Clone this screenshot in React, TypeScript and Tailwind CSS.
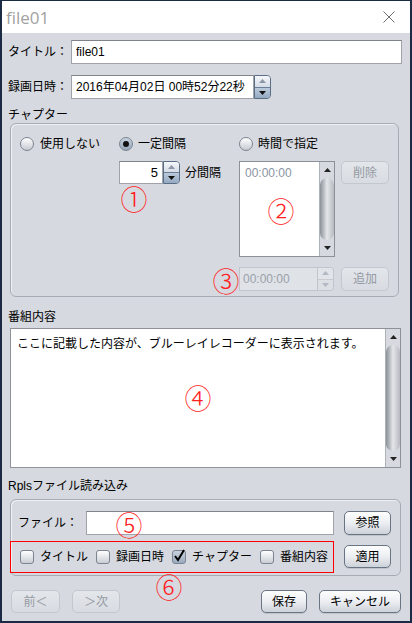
import React from "react";

function Tri({ up = false, color = "#1b1b1b" }: { up?: boolean; color?: string }) {
  return (
    <svg width="7" height="4" viewBox="0 0 7 4">
      <path d={up ? "M0 4 L3.5 0 L7 4 Z" : "M0 0 L7 0 L3.5 4 Z"} fill={color} />
    </svg>
  );
}

function Field({
  children,
  className = "",
  disabled = false,
}: {
  children?: React.ReactNode;
  className?: string;
  disabled?: boolean;
}) {
  return (
    <div
      className={`flex items-center border ${
        disabled
          ? "bg-[#dfe2e6] border-[#c2c6cc] text-[#9aa1ab]"
          : "bg-white border-[#a0a4aa] border-t-[#7f838a] text-black"
      } ${className}`}
    >
      {children}
    </div>
  );
}

function Spin({ disabled = false }: { disabled?: boolean }) {
  if (disabled) {
    return (
      <div className="w-[16px] h-full flex flex-col border border-l-0 border-[#c2c6cc] rounded-r-[4px] overflow-hidden">
        <div className="flex-1 flex items-center justify-center bg-[#e1e4e8] border-b border-[#c8ccd2]">
          <Tri up color="#b3b9c2" />
        </div>
        <div className="flex-1 flex items-center justify-center bg-[#dcdfe4]">
          <Tri color="#b3b9c2" />
        </div>
      </div>
    );
  }
  return (
    <div className="w-[17px] h-full flex flex-col border border-[#5a6d86] rounded-r-[4px] overflow-hidden">
      <div className="flex-1 flex items-center justify-center bg-linear-to-b from-[#f5f7fa] to-[#d4dce6] border-b border-[#6c7e95]">
        <Tri up color="#8b97a7" />
      </div>
      <div className="flex-1 flex items-center justify-center bg-linear-to-b from-[#bccadb] to-[#94a9c1]">
        <Tri color="#111" />
      </div>
    </div>
  );
}

function Btn({
  children,
  disabled = false,
  className = "",
}: {
  children: React.ReactNode;
  disabled?: boolean;
  className?: string;
}) {
  return (
    <div
      className={`flex items-center justify-center rounded-[5px] border ${
        disabled
          ? "border-[#c3c8cf] bg-linear-to-b from-[#e3e6ea] to-[#d8dbe1] text-[#949aa3]"
          : "border-[#6a7584] bg-linear-to-b from-[#fefefe] via-[#eceef2] to-[#cdd2d9] text-black shadow-[0_1px_0_#bfc4cb]"
      } ${className}`}
    >
      {children}
    </div>
  );
}

function Radio({ checked = false }: { checked?: boolean }) {
  return (
    <div
      className={`w-[14px] h-[14px] rounded-full border border-[#7b8490] flex items-center justify-center ${
        checked
          ? "bg-linear-to-b from-[#c9d3df] to-[#95a7bc]"
          : "bg-linear-to-b from-[#ffffff] to-[#c6cbd2]"
      }`}
    >
      {checked && <div className="w-[6px] h-[6px] rounded-full bg-[#111]" />}
    </div>
  );
}

function Check({ checked = false }: { checked?: boolean }) {
  return (
    <div
      className={`w-[14px] h-[14px] rounded-[3px] border border-[#7b8490] flex items-center justify-center ${
        checked
          ? "bg-linear-to-b from-[#c9d3df] to-[#9aabbf]"
          : "bg-linear-to-b from-[#ffffff] to-[#c9ced5]"
      }`}
    >
      {checked && (
        <svg width="12" height="13" viewBox="0 0 12 13" className="-mt-[3px]">
          <path d="M2 7 L5 11 L11 1" stroke="#000" strokeWidth="2" fill="none" />
        </svg>
      )}
    </div>
  );
}

function VScroll() {
  return (
    <div className="w-[15px] h-full flex flex-col bg-[#d6d9df] border-l border-[#aeb3ba]">
      <div className="h-[16px] flex items-center justify-center shrink-0">
        <Tri up color="#222" />
      </div>
      <div className="flex-1 rounded-[7px] bg-linear-to-r from-[#8b9098] via-[#e4e6e9] to-[#b6bac0]" />
      <div className="h-[16px] flex items-center justify-center shrink-0">
        <Tri color="#222" />
      </div>
    </div>
  );
}

function Mark({ n, x, y }: { n: string; x: number; y: number }) {
  return (
    <span
      className="absolute w-[30px] h-[30px] flex items-center justify-center text-[27px] leading-none text-[#ff2020] font-['Noto_Sans_CJK_JP',sans-serif] font-light"
      style={{ left: x - 15, top: y - 15 }}
    >
      {n}
    </span>
  );
}

export default function App() {
  return (
    <div className="relative w-[412px] h-[623px] overflow-hidden bg-[#d6d9df] border-x-2 border-b-2 border-t border-[#1b2b43] flex flex-col text-[12px] leading-none text-black font-['Liberation_Sans','Noto_Sans_CJK_JP',sans-serif]">
      {/* title bar */}
      <div className="h-[32px] shrink-0 bg-white flex items-center justify-between pl-[4px] pr-[15px]">
        <span className="text-[17px] text-[#a2a2a2] font-['Open_Sans',sans-serif]">file01</span>
        <svg width="12" height="12" viewBox="0 0 12 12">
          <path d="M0.5 0.5 L11.5 11.5 M11.5 0.5 L0.5 11.5" stroke="#6e6e6e" strokeWidth="1" />
        </svg>
      </div>

      <div className="flex flex-col pl-[6px] pr-[8px]">
        {/* title row */}
        <div className="mt-[7px] h-[24px] flex items-center">
          <span className="w-[63px]">タイトル：</span>
          <Field className="flex-1 h-full pl-[4px]">file01</Field>
        </div>

        {/* date row */}
        <div className="mt-[11px] h-[24px] flex items-center">
          <span className="w-[63px]">録画日時：</span>
          <Field className="w-[183px] h-full pl-[4px]">2016年04月02日 00時52分22秒</Field>
          <Spin />
        </div>

        {/* chapter */}
        <div className="mt-[8px] h-[16px] flex items-center">チャプター</div>
        <div className="ml-[2px] mr-[3px] h-[174px] rounded-[6px] border border-[#a6acb6] shadow-[inset_1px_1px_0_#eef0f3] pt-[12px] pl-[9px] flex">
          <div className="w-[99px] h-[16px] flex items-center gap-[6px]">
            <Radio />
            <span>使用しない</span>
          </div>
          <div className="w-[120px] flex flex-col">
            <div className="h-[16px] flex items-center gap-[5px]">
              <Radio checked />
              <span>一定間隔</span>
            </div>
            <div className="mt-[9px] h-[23px] flex items-center">
              <Field className="w-[44px] h-full justify-end pr-[4px] text-[13px]">5</Field>
              <Spin />
              <span className="ml-[5px]">分間隔</span>
            </div>
          </div>
          <div className="flex flex-col">
            <div className="h-[16px] flex items-center gap-[5px]">
              <Radio />
              <span>時間で指定</span>
            </div>
            <div className="mt-[9px] flex items-start">
              <div className="w-[96px] h-[96px] flex border border-[#8c9097] bg-white">
                <div className="flex-1 pl-[5px] pt-[5px] text-[#8a94a2] text-[12px]">00:00:00</div>
                <VScroll />
              </div>
              <Btn disabled className="ml-[6px] w-[48px] h-[23px]">
                削除
              </Btn>
            </div>
            <div className="mt-[10px] h-[24px] flex items-center">
              <Field disabled className="w-[79px] h-full pl-[3px]">
                00:00:00
              </Field>
              <Spin disabled />
              <Btn disabled className="ml-[7px] w-[48px] h-full">
                追加
              </Btn>
            </div>
          </div>
        </div>

        {/* program contents */}
        <div className="mt-[12px] h-[16px] flex items-center">番組内容</div>
        <div className="mt-[3px] ml-[2px] mr-[1px] h-[140px] flex border border-[#8f9399] bg-white">
          <div className="flex-1 pl-[6px] pt-[9px]">ここに記載した内容が、ブルーレイレコーダーに表示されます。</div>
          <VScroll />
        </div>

        {/* rpls */}
        <div className="mt-[10px] h-[16px] flex items-center">Rplsファイル読み込み</div>
        <div className="mt-[5px] ml-[2px] mr-[1px] h-[77px] rounded-[6px] border border-[#a6acb6] shadow-[inset_1px_1px_0_#eef0f3] pt-[11px] pr-[9px] flex">
          <div className="w-[323px] flex flex-col">
            <div className="h-[24px] flex items-center">
              <span className="w-[75px] pl-[7px]">ファイル：</span>
              <Field className="w-[248px] h-full" />
            </div>
            <div className="mt-[6px] -ml-[1px] w-[324px] h-[32px] border border-[#ff0000] pl-[9px] flex items-center gap-[8px]">
              <div className="flex items-center gap-[6px]">
                <Check />
                <span>タイトル</span>
              </div>
              <div className="flex items-center gap-[6px]">
                <Check />
                <span>録画日時</span>
              </div>
              <div className="flex items-center gap-[6px]">
                <Check checked />
                <span>チャプター</span>
              </div>
              <div className="flex items-center gap-[6px]">
                <Check />
                <span>番組内容</span>
              </div>
            </div>
          </div>
          <div className="ml-[10px] w-[47px] flex flex-col">
            <Btn className="h-[24px]">参照</Btn>
            <Btn className="mt-[10px] h-[23px]">適用</Btn>
          </div>
        </div>

        {/* bottom buttons */}
        <div className="mt-[14px] h-[23px] flex items-stretch">
          <Btn disabled className="ml-[3px] w-[49px]">
            前＜
          </Btn>
          <Btn disabled className="ml-[12px] w-[48px]">
            ＞次
          </Btn>
          <div className="flex-1" />
          <Btn className="w-[46px]">保存</Btn>
          <Btn className="ml-[12px] mr-[1px] w-[82px]">キャンセル</Btn>
        </div>
      </div>

      {/* annotation marks */}
      <Mark n="①" x={132} y={197} />
      <Mark n="②" x={279} y={209} />
      <Mark n="③" x={224} y={279} />
      <Mark n="④" x={196} y={396} />
      <Mark n="⑤" x={127} y={523} />
      <Mark n="⑥" x={167} y={585} />
    </div>
  );
}
